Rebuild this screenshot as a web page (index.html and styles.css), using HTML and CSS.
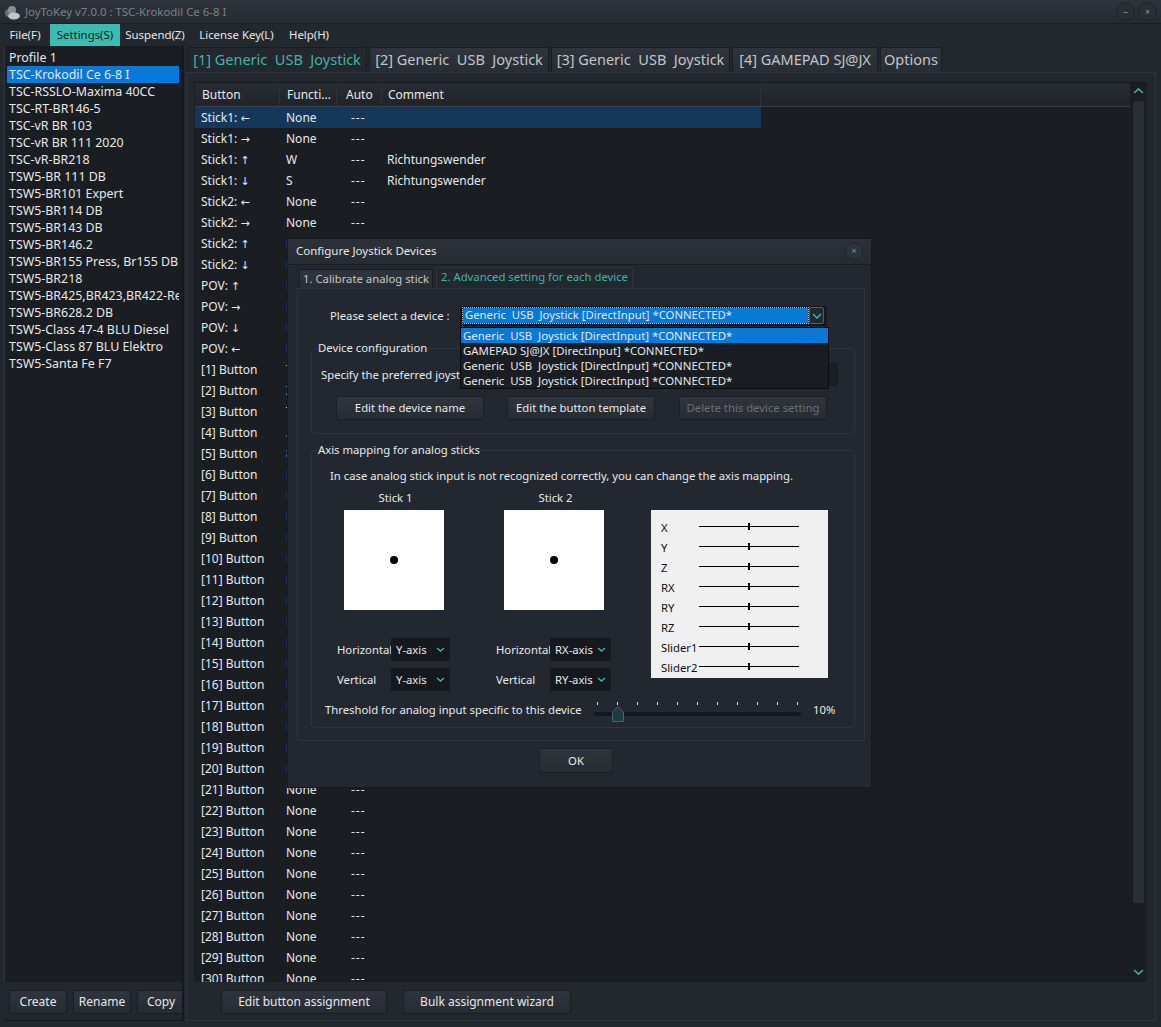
FILE: index.html
```html
<!DOCTYPE html>
<html lang="en">
<head>
<meta charset="utf-8">
<title>JoyToKey</title>
<link rel="stylesheet" href="styles.css">
</head>
<body>
<div class="app">
  <header class="titlebar">
    <svg class="logo" width="18" height="16" viewBox="0 0 18 16"><circle cx="6" cy="8" r="4" fill="#6d7176"/><circle cx="9" cy="5" r="4" fill="#8b8f94"/><ellipse cx="11" cy="11" rx="6" ry="3.500" fill="#c2c4c6"/></svg>
    <span class="title-text">JoyToKey v7.0.0 : TSC-Krokodil Ce 6-8 I</span>
    <div class="winbtns">
      <span class="winbtn">–</span>
      <span class="winbtn small">×</span>
    </div>
  </header>
  <nav class="menubar">
    <span class="menu m1">File(F)</span>
    <span class="menu m2 on">Settings(S)</span>
    <span class="menu m3">Suspend(Z)</span>
    <span class="menu m4">License Key(L)</span>
    <span class="menu m5">Help(H)</span>
  </nav>
  <main class="main">
    <aside class="side">
      <ul class="profiles">
        <li>Profile 1</li>
        <li class="sel">TSC-Krokodil Ce 6-8 I</li>
        <li>TSC-RSSLO-Maxima 40CC</li>
        <li>TSC-RT-BR146-5</li>
        <li>TSC-vR BR 103</li>
        <li>TSC-vR BR 111 2020</li>
        <li>TSC-vR-BR218</li>
        <li>TSW5-BR 111 DB</li>
        <li>TSW5-BR101 Expert</li>
        <li>TSW5-BR114 DB</li>
        <li>TSW5-BR143 DB</li>
        <li>TSW5-BR146.2</li>
        <li>TSW5-BR155 Press, Br155 DB</li>
        <li>TSW5-BR218</li>
        <li>TSW5-BR425,BR423,BR422-Re</li>
        <li>TSW5-BR628.2 DB</li>
        <li>TSW5-Class 47-4 BLU Diesel</li>
        <li>TSW5-Class 87 BLU Elektro</li>
        <li>TSW5-Santa Fe F7</li>
      </ul>
      <div class="side-btns">
        <button class="btn b-create">Create</button>
        <button class="btn b-rename">Rename</button>
        <button class="btn b-copy">Copy</button>
      </div>
    </aside>
    <section class="content">
      <div class="tabs">
        <span class="tab active t1">[1] Generic&nbsp; USB&nbsp; Joystick</span>
        <span class="tab t2">[2] Generic&nbsp; USB&nbsp; Joystick</span>
        <span class="tab t3">[3] Generic&nbsp; USB&nbsp; Joystick</span>
        <span class="tab t4">[4] GAMEPAD SJ@JX</span>
        <span class="tab t5">Options</span>
      </div>
      <div class="pane">
        <div class="tablewrap">
          <div class="table">
            <div class="thead">
              <span class="th c1">Button</span><span class="th c2">Functi...</span><span class="th c3">Auto</span><span class="th c4">Comment</span>
            </div>
            <div class="row sel"><span class="c1">Stick1: <b class="arr">←</b></span><span class="c2">None</span><span class="c3">---</span><span class="c4"></span></div>
            <div class="row"><span class="c1">Stick1: <b class="arr">→</b></span><span class="c2">None</span><span class="c3">---</span><span class="c4"></span></div>
            <div class="row"><span class="c1">Stick1: <b class="arr">↑</b></span><span class="c2">W</span><span class="c3">---</span><span class="c4">Richtungswender</span></div>
            <div class="row"><span class="c1">Stick1: <b class="arr">↓</b></span><span class="c2">S</span><span class="c3">---</span><span class="c4">Richtungswender</span></div>
            <div class="row"><span class="c1">Stick2: <b class="arr">←</b></span><span class="c2">None</span><span class="c3">---</span><span class="c4"></span></div>
            <div class="row"><span class="c1">Stick2: <b class="arr">→</b></span><span class="c2">None</span><span class="c3">---</span><span class="c4"></span></div>
            <div class="row"><span class="c1">Stick2: <b class="arr">↑</b></span><span class="c2">None</span><span class="c3">---</span><span class="c4"></span></div>
            <div class="row"><span class="c1">Stick2: <b class="arr">↓</b></span><span class="c2">None</span><span class="c3">---</span><span class="c4"></span></div>
            <div class="row"><span class="c1">POV: <b class="arr">↑</b></span><span class="c2">None</span><span class="c3">---</span><span class="c4"></span></div>
            <div class="row"><span class="c1">POV: <b class="arr">→</b></span><span class="c2">None</span><span class="c3">---</span><span class="c4"></span></div>
            <div class="row"><span class="c1">POV: <b class="arr">↓</b></span><span class="c2">None</span><span class="c3">---</span><span class="c4"></span></div>
            <div class="row"><span class="c1">POV: <b class="arr">←</b></span><span class="c2">None</span><span class="c3">---</span><span class="c4"></span></div>
            <div class="row"><span class="c1">[1] Button</span><span class="c2">T</span><span class="c3">---</span><span class="c4"></span></div>
            <div class="row"><span class="c1">[2] Button</span><span class="c2">X</span><span class="c3">---</span><span class="c4"></span></div>
            <div class="row"><span class="c1">[3] Button</span><span class="c2">T</span><span class="c3">---</span><span class="c4"></span></div>
            <div class="row"><span class="c1">[4] Button</span><span class="c2">2</span><span class="c3">---</span><span class="c4"></span></div>
            <div class="row"><span class="c1">[5] Button</span><span class="c2">8</span><span class="c3">---</span><span class="c4"></span></div>
            <div class="row"><span class="c1">[6] Button</span><span class="c2">F</span><span class="c3">---</span><span class="c4"></span></div>
            <div class="row"><span class="c1">[7] Button</span><span class="c2">None</span><span class="c3">---</span><span class="c4"></span></div>
            <div class="row"><span class="c1">[8] Button</span><span class="c2">None</span><span class="c3">---</span><span class="c4"></span></div>
            <div class="row"><span class="c1">[9] Button</span><span class="c2">None</span><span class="c3">---</span><span class="c4"></span></div>
            <div class="row"><span class="c1">[10] Button</span><span class="c2">None</span><span class="c3">---</span><span class="c4"></span></div>
            <div class="row"><span class="c1">[11] Button</span><span class="c2">None</span><span class="c3">---</span><span class="c4"></span></div>
            <div class="row"><span class="c1">[12] Button</span><span class="c2">None</span><span class="c3">---</span><span class="c4"></span></div>
            <div class="row"><span class="c1">[13] Button</span><span class="c2">None</span><span class="c3">---</span><span class="c4"></span></div>
            <div class="row"><span class="c1">[14] Button</span><span class="c2">None</span><span class="c3">---</span><span class="c4"></span></div>
            <div class="row"><span class="c1">[15] Button</span><span class="c2">None</span><span class="c3">---</span><span class="c4"></span></div>
            <div class="row"><span class="c1">[16] Button</span><span class="c2">None</span><span class="c3">---</span><span class="c4"></span></div>
            <div class="row"><span class="c1">[17] Button</span><span class="c2">None</span><span class="c3">---</span><span class="c4"></span></div>
            <div class="row"><span class="c1">[18] Button</span><span class="c2">None</span><span class="c3">---</span><span class="c4"></span></div>
            <div class="row"><span class="c1">[19] Button</span><span class="c2">None</span><span class="c3">---</span><span class="c4"></span></div>
            <div class="row"><span class="c1">[20] Button</span><span class="c2">None</span><span class="c3">---</span><span class="c4"></span></div>
            <div class="row"><span class="c1">[21] Button</span><span class="c2">None</span><span class="c3">---</span><span class="c4"></span></div>
            <div class="row"><span class="c1">[22] Button</span><span class="c2">None</span><span class="c3">---</span><span class="c4"></span></div>
            <div class="row"><span class="c1">[23] Button</span><span class="c2">None</span><span class="c3">---</span><span class="c4"></span></div>
            <div class="row"><span class="c1">[24] Button</span><span class="c2">None</span><span class="c3">---</span><span class="c4"></span></div>
            <div class="row"><span class="c1">[25] Button</span><span class="c2">None</span><span class="c3">---</span><span class="c4"></span></div>
            <div class="row"><span class="c1">[26] Button</span><span class="c2">None</span><span class="c3">---</span><span class="c4"></span></div>
            <div class="row"><span class="c1">[27] Button</span><span class="c2">None</span><span class="c3">---</span><span class="c4"></span></div>
            <div class="row"><span class="c1">[28] Button</span><span class="c2">None</span><span class="c3">---</span><span class="c4"></span></div>
            <div class="row"><span class="c1">[29] Button</span><span class="c2">None</span><span class="c3">---</span><span class="c4"></span></div>
            <div class="row"><span class="c1">[30] Button</span><span class="c2">None</span><span class="c3">---</span><span class="c4"></span></div>
          </div>
          <div class="scrollbar">
            <svg class="chev" width="11" height="6" viewBox="0 0 11 6"><path d="M1 5l4.500-4 4.500 4" fill="none" stroke="#3fb5a8" stroke-width="1.6"/></svg>
            <div class="thumb"></div>
            <svg class="chev" width="11" height="6" viewBox="0 0 11 6"><path d="M1 1l4.500 4 4.500-4" fill="none" stroke="#3fb5a8" stroke-width="1.6"/></svg>
          </div>
        </div>
        <div class="pane-btns">
          <button class="btn b-edit">Edit button assignment</button>
          <button class="btn b-bulk">Bulk assignment wizard</button>
        </div>
      </div>
    </section>
  </main>
</div>

<div class="dialog">
  <div class="dlg-title">
    <span>Configure Joystick Devices</span>
    <span class="dlg-close">×</span>
  </div>
  <div class="dlg-tabs">
    <span class="dtab">1. Calibrate analog stick</span>
    <span class="dtab active">2. Advanced setting for each device</span>
  </div>
  <div class="dlg-pane">
    <div class="dev-row">
      <span class="dev-label">Please select a device :</span>
      <div class="dev-combo">
        <span class="dev-value">Generic&nbsp; USB&nbsp; Joystick [DirectInput] *CONNECTED*</span>
        <span class="dev-arrow"><svg width="10" height="6" viewBox="0 0 10 6"><path d="M1 1l4 4 4-4" fill="none" stroke="#3fb5a8" stroke-width="1.5"/></svg></span>
      </div>
    </div>
    <fieldset class="group g-dev">
      <legend>Device configuration</legend>
      <div class="pref-row">
        <span class="pref-label">Specify the preferred joystick</span>
        <span class="pref-combo"></span>
      </div>
      <div class="dev-btns">
        <button class="btn b-dev">Edit the device name</button>
        <button class="btn b-dev">Edit the button template</button>
        <button class="btn b-dev disabled">Delete this device setting</button>
      </div>
    </fieldset>
    <fieldset class="group g-axis">
      <legend>Axis mapping for analog sticks</legend>
      <p class="axis-note">In case analog stick input is not recognized correctly, you can change the axis mapping.</p>
      <div class="axis-main">
        <div class="stick s1">
          <div class="stick-name">Stick 1</div>
          <div class="stick-box"><i class="dot"></i></div>
          <div class="map-row"><span class="map-label">Horizontal</span><span class="mini y">Y-axis<svg width="9" height="5" viewBox="0 0 9 5"><path d="M1 1l3.500 3L8 1" fill="none" stroke="#3fb5a8" stroke-width="1.4"/></svg></span></div>
          <div class="map-row"><span class="map-label">Vertical</span><span class="mini y">Y-axis<svg width="9" height="5" viewBox="0 0 9 5"><path d="M1 1l3.500 3L8 1" fill="none" stroke="#3fb5a8" stroke-width="1.4"/></svg></span></div>
        </div>
        <div class="stick s2">
          <div class="stick-name">Stick 2</div>
          <div class="stick-box"><i class="dot"></i></div>
          <div class="map-row"><span class="map-label">Horizontal</span><span class="mini r">RX-axis<svg width="9" height="5" viewBox="0 0 9 5"><path d="M1 1l3.500 3L8 1" fill="none" stroke="#3fb5a8" stroke-width="1.4"/></svg></span></div>
          <div class="map-row"><span class="map-label">Vertical</span><span class="mini r">RY-axis<svg width="9" height="5" viewBox="0 0 9 5"><path d="M1 1l3.500 3L8 1" fill="none" stroke="#3fb5a8" stroke-width="1.4"/></svg></span></div>
        </div>
        <div class="axes">
          <div class="axis"><span>X</span><i></i></div>
          <div class="axis"><span>Y</span><i></i></div>
          <div class="axis"><span>Z</span><i></i></div>
          <div class="axis"><span>RX</span><i></i></div>
          <div class="axis"><span>RY</span><i></i></div>
          <div class="axis"><span>RZ</span><i></i></div>
          <div class="axis"><span>Slider1</span><i></i></div>
          <div class="axis"><span>Slider2</span><i></i></div>
        </div>
      </div>
      <div class="thresh">
        <span class="thresh-label">Threshold for analog input specific to this device</span>
        <div class="slider">
          <div class="ticks"><i></i><i></i><i></i><i></i><i></i><i></i><i></i><i></i><i></i><i></i><i></i></div>
          <div class="track"></div>
          <svg class="knob" width="12" height="16" viewBox="0 0 12 16"><path d="M.5 15.500V6L6 .7 11.500 6v9.500z" fill="#1f3a40" stroke="#3d6a6c"/></svg>
        </div>
        <span class="thresh-val">10%</span>
      </div>
    </fieldset>
  </div>
  <div class="dlg-foot"><button class="btn b-ok">OK</button></div>
  <ul class="droplist">
    <li class="on">Generic&nbsp; USB&nbsp; Joystick [DirectInput] *CONNECTED*</li>
    <li>GAMEPAD SJ@JX [DirectInput] *CONNECTED*</li>
    <li>Generic&nbsp; USB&nbsp; Joystick [DirectInput] *CONNECTED*</li>
    <li>Generic&nbsp; USB&nbsp; Joystick [DirectInput] *CONNECTED*</li>
  </ul>
</div>
</body>
</html>
```
FILE: styles.css
```css
* { box-sizing: border-box; }
html, body { margin: 0; padding: 0; height: 100%; overflow: hidden; }
body {
  position: relative;
  background: #23272e;
  color: #e6e8ea;
  font: 12px/16px "Noto Sans", "Open Sans", sans-serif;
}
ul { list-style: none; margin: 0; padding: 0; }
.app { display: flex; flex-direction: column; height: 1027px; }

.titlebar {
  height: 24px;
  display: flex;
  align-items: center;
  padding-left: 3px;
  background: linear-gradient(#2f343c, #262a31);
  border-bottom: 1px solid #1a1d22;
  color: #7d8186;
}
.logo { margin-right: 3px; margin-top: 2px; }
.title-text { font-size: 11.4px; margin-left: 1px; }
.winbtns { margin-left: auto; margin-right: 4px; display: flex; gap: 3px; }
.winbtn {
  width: 19px; height: 19px;
  border-radius: 50%;
  border: 1px solid #1f2227;
  background: #2a2e35;
  color: #9a9da1;
  font-size: 9px;
  line-height: 17px;
  text-align: center;
}
.winbtn.small { font-size: 8px; }

.menubar { height: 22px; display: flex; padding-left: 3px; align-items: stretch; font-size: 11.4px; }
.menu { display: flex; align-items: center; justify-content: center; }
.m1 { width: 47px; padding-right: 3px; }
.m2 { width: 70px; background: #3cbcb1; color: #14201f; }
.m3 { width: 70px; }
.m4 { width: 93px; }
.m5 { width: 52px; }

.main { flex: 1; display: flex; min-height: 0; }

.side {
  width: 180px;
  margin: 0 0 6px 4px;
  display: flex;
  flex-direction: column;
  border-right: 2px solid #15181c;
  border-bottom: 1px solid #15181c;
  flex: none;
}
.profiles {
  flex: 1;
  background: #1a1d22;
  padding: 2px 3px 0 2px;
  border-left: 1px solid #30353c;
  border-top: 1px solid #15181c;
}
.profiles li { height: 17px; line-height: 17px; padding-left: 2px; white-space: nowrap; overflow: hidden; font-size: 12.4px; }
.profiles li.sel { background: #0a78d7; }

.side-btns {
  height: 38px;
  display: flex;
  gap: 6px;
  padding: 8px 0 0 5px;
  overflow: hidden;
  flex: none;
}
.btn {
  height: 24px;
  padding: 0;
  background: linear-gradient(#30353d, #272b32);
  border: 1px solid #1b1e23;
  border-radius: 2px;
  color: #e6e8ea;
  font: inherit;
  flex: none;
}
.b-create, .b-rename { width: 58px; }
.b-copy { width: 58px; text-align: left; padding-left: 9px; }

.content { flex: 1; display: flex; flex-direction: column; min-width: 0; padding: 1px 5px 6px 3px; }
.tabs { height: 25px; display: flex; gap: 2px; flex: none; }
.tab {
  font-size: 14.5px;
  line-height: 23px;
  border: 1px solid #1a1d22;
  border-bottom: 0;
  border-radius: 2px 2px 0 0;
  background: linear-gradient(#30353d, #282c33);
  color: #c2c5c8;
  text-align: center;
  white-space: nowrap;
  overflow: hidden;
  flex: none;
}
.tab.active { color: #3fb5a8; background: #23272e; }
.t1 { width: 180px; }
.t2 { width: 180px; }
.t3 { width: 179px; }
.t4 { width: 146px; }
.t5 { width: 62px; }

.pane {
  flex: 1;
  min-height: 0;
  border: 1px solid #30353c;
  padding: 9px 8px 0 7px;
  margin-left: -1px;
  display: flex;
  flex-direction: column;
}
.tablewrap { flex: 1; min-height: 0; display: flex; background: #1a1d22; border-top: 1px solid #15181c; }
.table { width: 936px; overflow: hidden; flex: none; }
.thead {
  display: grid;
  grid-template-columns: 85px 57px 45px 379px 1fr;
  height: 24px;
  margin-left: 1px;
  background: linear-gradient(#282c33, #20232a);
  border-bottom: 1px solid #3a3f46;
}
.th { line-height: 23px; padding-left: 7px; border-right: 1px solid #2e3238; }
.th.c3 { padding-left: 9px; }
.th.c4 { padding-left: 6px; }
.row {
  display: grid;
  grid-template-columns: 85px 65px 42px 374px;
  width: 566px;
  margin-left: 1px;
  height: 21px;
  line-height: 21px;
}
.row .c1 { padding-left: 6px; }
.row .c2 { padding-left: 6px; }
.row .c3 { padding-left: 6px; letter-spacing: 1px; }
.row .c4 { padding-left: 0; }
.row.sel { background: #15385a; }
.arr { font: 11px/1 "DejaVu Sans", sans-serif; }

.scrollbar {
  width: 14px;
  margin-left: 1px;
  display: flex;
  flex-direction: column;
  align-items: center;
  padding: 5px 0 7px;
  gap: 7px;
  flex: none;
}
.thumb { flex: 1; width: 11px; background: #2a2e35; margin-bottom: 59px; border-radius: 2px 2px 0 0; }

.pane-btns { height: 38px; flex: none; display: flex; gap: 16px; padding: 8px 0 0 27px; }
.b-edit { width: 166px; }
.b-bulk { width: 168px; }

.dialog {
  position: absolute;
  left: 288px; top: 239px;
  width: 583px; height: 548px;
  background: #232830;
  box-shadow: 0 0 0 1px #16191d;
  display: flex;
  flex-direction: column;
  font-size: 11.3px;
}
.dlg-title {
  height: 26px;
  flex: none;
  display: flex;
  align-items: center;
  justify-content: space-between;
  padding: 0 8px 2px;
  background: linear-gradient(#2d3139, #262a31);
  border-bottom: 1px solid #1a1d22;
  font-size: 11.5px;
}
.dlg-close {
  width: 18px; height: 18px;
  border-radius: 50%;
  background: #2f343b;
  border: 1px solid #1f2227;
  color: #3fb5a8;
  font-size: 9px;
  line-height: 16px;
  text-align: center;
}
.dlg-tabs { height: 23px; flex: none; display: flex; align-items: flex-end; gap: 3px; padding-left: 11px; }
.dtab {
  height: 19px;
  width: 134px;
  line-height: 17px;
  text-align: center;
  white-space: nowrap;
  border: 1px solid #1a1d22;
  border-bottom: 0;
  border-radius: 2px 2px 0 0;
  background: linear-gradient(#30353d, #282c33);
  color: #c2c5c8;
}
.dtab.active { height: 21px; width: 197px; line-height: 18px; color: #3fb5a8; background: #23272e; border-color: #30353c; }
.dlg-pane {
  height: 453px;
  flex: none;
  margin: 0 6px 0 9px;
  border: 1px solid #30353c;
  padding: 16px 9px 0 13px;
  position: relative;
}
.dev-row { display: flex; align-items: center; height: 21px; }
.dev-label { width: 149px; padding-left: 19px; white-space: nowrap; }
.dev-combo { display: flex; align-items: center; width: 367px; height: 20px; background: #15181c; }
.dev-value {
  width: 345px; height: 15px; margin-left: 3px;
  background: #0a78d7;
  line-height: 14px;
  padding-left: 2px;
  outline: 1px dotted #bfc3c7;
  white-space: nowrap;
  overflow: hidden;
}
.dev-arrow {
  width: 15px; height: 17px; margin-left: 1px;
  display: flex; align-items: center; justify-content: center;
  border: 1px solid #3d6a6c;
  border-radius: 2px;
  background: #1f2a30;
}
.group {
  margin: 0;
  padding: 0;
  min-width: 0;
  border: 1px solid #30353c;
  border-radius: 4px;
}
.group legend { padding: 0; margin-left: 6px; line-height: 16px; }
.g-dev { height: 94px; margin-top: 14px; }
.pref-row { display: flex; align-items: center; height: 23px; margin-top: 7px; white-space: nowrap; padding-left: 9px; }
.pref-label { width: 140px; overflow: hidden; flex: none; }
.pref-combo { margin-left: 1px; width: 376px; height: 23px; background: #1a1d22; }
.dev-btns { display: flex; gap: 23px; padding: 10px 0 0 24px; }
.b-dev { width: 148px; }
.disabled { color: #6d7176; margin-left: 1px; }
.g-axis { height: 286px; margin-top: 8px; }
.axis-note { margin: 10px 0 0 18px; line-height: 16px; white-space: nowrap; }
.axis-main { display: flex; margin-top: 6px; height: 211px; }
.stick { width: 160px; padding-left: 32px; flex: none; }
.stick-name { width: 100px; padding-left: 3px; text-align: center; line-height: 16px; }
.stick-box {
  width: 100px; height: 100px;
  margin: 4px 0 28px;
  background: #fff;
  display: flex; align-items: center; justify-content: center;
}
.dot { width: 8px; height: 8px; border-radius: 50%; background: #000; }
.map-row { display: flex; align-items: center; height: 23px; margin-bottom: 7px; margin-left: -7px; }
.s2 .map-row { margin-left: -8px; }
.map-label { width: 54px; white-space: nowrap; flex: none; overflow: hidden; }
.mini {
  height: 23px;
  background: #15181c;
  display: flex; align-items: center; justify-content: space-between;
  padding: 0 5px;
  white-space: nowrap;
}
.mini.y { width: 59px; }
.mini.r { width: 61px; }
.axes {
  width: 177px; height: 168px;
  margin: 20px 0 0 19px;
  background: #f0f0f0;
  color: #111;
  padding: 8px 0 0 10px;
  flex: none;
}
.axis { display: flex; align-items: center; height: 20px; }
.axis span { width: 38px; flex: none; white-space: nowrap; }
.axis i { position: relative; display: block; width: 100px; height: 1px; background: #000; margin-top: -3px; }
.axis i::after { content: ""; position: absolute; left: 49px; top: -3px; width: 2px; height: 7px; background: #000; }
.thresh { display: flex; align-items: center; height: 24px; margin-top: -3px; padding-left: 13px; }
.thresh-label { width: 269px; white-space: nowrap; flex: none; }
.slider { position: relative; width: 207px; height: 24px; flex: none; }
.ticks { display: flex; justify-content: space-between; padding: 4px 3px 0; }
.ticks i { width: 1px; height: 3px; background: #d8dadc; }
.track { position: absolute; left: 0; right: 0; top: 14px; height: 4px; background: #14171b; border-radius: 2px; }
.knob { position: absolute; left: 18px; top: 8px; }
.thresh-val { margin-left: 12px; }
.dlg-foot { flex: 1; display: flex; justify-content: center; padding: 7px 7px 0 0; }
.b-ok { width: 74px; height: 25px; }

.droplist {
  position: absolute;
  left: 173px; top: 89px;
  width: 367px;
  background: #1a1d22;
  box-shadow: 0 0 0 1px #0b0c0e;
}
.droplist li { height: 15px; line-height: 15px; padding-left: 2px; white-space: nowrap; font-size: 11.4px; }
.droplist li.on { background: #0a78d7; }
```
